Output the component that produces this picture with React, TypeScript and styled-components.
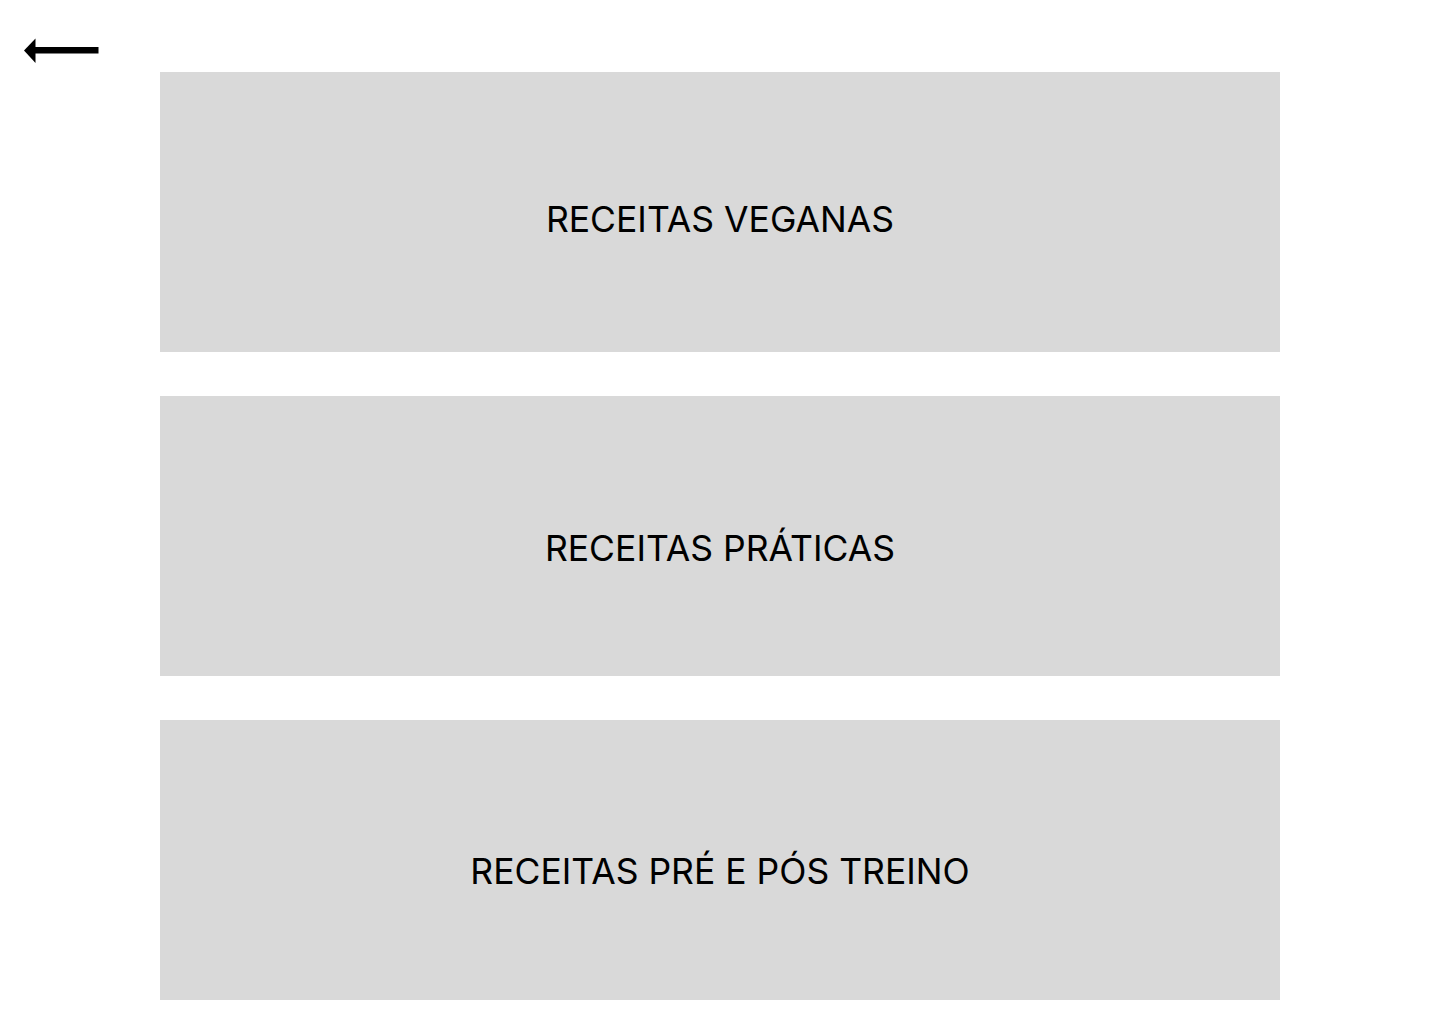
import { createGlobalStyle, styled } from 'styled-components';

const GlobalStyle = createGlobalStyle`
  body {
    margin: 0;
    background: #ffffff;
    font-family: Inter, "Noto Sans", sans-serif;
    color: #000000;
  }
`;

type cardType = {
  $shift: number;
};

const categories = [
  { title: 'RECEITAS VEGANAS', shift: 7.5 },
  { title: 'RECEITAS PRÁTICAS', shift: 13 },
  { title: 'RECEITAS PRÉ E PÓS TREINO', shift: 12 },
];

const BackArrow = () => (
  <svg width="75" height="28" viewBox="0 0 75 28" fill="none">
    <path d="M0 13.5 L11.5 1.5 L11.5 26 Z" fill="#000" />
    <rect x="10" y="10" width="64.5" height="6.5" fill="#000" />
  </svg>
);

const App = () => {
  return (
    <>
      <GlobalStyle />
      <Page>
        <BackButton type="button" aria-label="voltar">
          <BackArrow />
        </BackButton>
        <CardList>
          {categories.map((c) => (
            <Card key={c.title} $shift={c.shift}>
              {c.title}
            </Card>
          ))}
        </CardList>
      </Page>
    </>
  );
};

export default App;

const Page = styled.div`
  position: relative;
  width: 1440px;
  min-height: 1024px;
  padding-top: 72px;
  box-sizing: border-box;
`;

const BackButton = styled.button`
  position: absolute;
  top: 37px;
  left: 24px;
  padding: 0;
  border: none;
  background: none;
  line-height: 0;
  cursor: pointer;
`;

const CardList = styled.div`
  display: flex;
  flex-direction: column;
  gap: 44px;
  width: 1120px;
  margin: 0 auto;
`;

const Card = styled.div<cardType>`
  display: flex;
  align-items: center;
  justify-content: center;
  height: 280px;
  padding-top: ${(p) => p.$shift * 2}px;
  box-sizing: border-box;
  background-color: #d9d9d9;
  font-size: 35.5px;
  font-weight: 400;
  line-height: 1;
  cursor: pointer;
`;
